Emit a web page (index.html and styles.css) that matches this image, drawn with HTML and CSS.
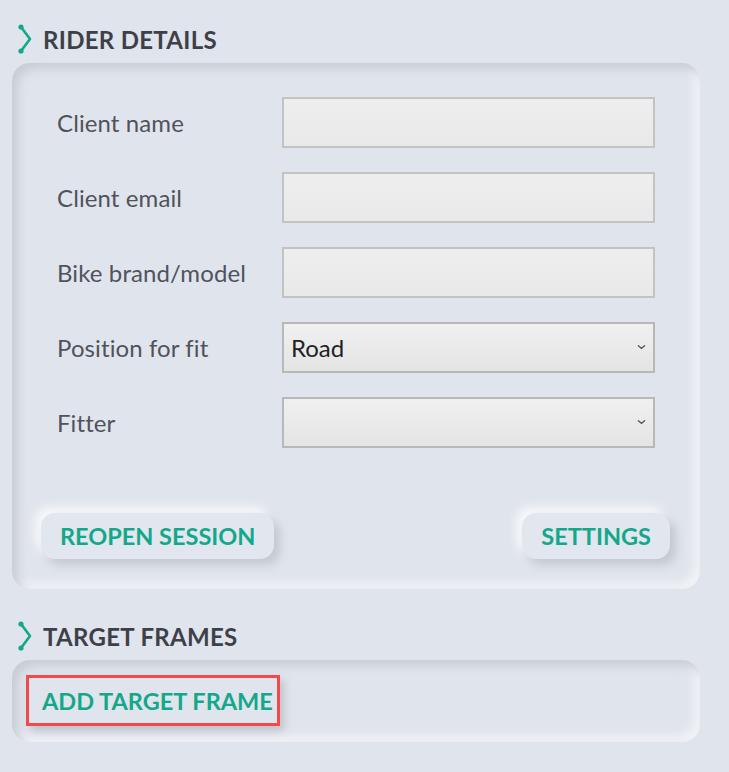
FILE: index.html
```html
<!DOCTYPE html>
<html>
<head>
<meta charset="utf-8">
<link rel="stylesheet" href="styles.css">
</head>
<body>
<div class="page">
  <h2 class="section-title">
    <svg class="chev" viewBox="0 0 16 30" width="16" height="30"><polyline points="4,3 13,15 4,27" fill="none" stroke="#14a88a" stroke-width="2.6" stroke-linecap="round" stroke-linejoin="round"/><circle cx="4" cy="3" r="2.6" fill="#14a88a"/><circle cx="4" cy="27" r="2.6" fill="#14a88a"/></svg>
    <span>RIDER DETAILS</span>
  </h2>
  <div class="card card-rider">
    <div class="form">
      <label class="label">Client name</label>
      <input class="field" type="text">
      <label class="label">Client email</label>
      <input class="field" type="text">
      <label class="label">Bike brand/model</label>
      <input class="field" type="text">
      <label class="label">Position for fit</label>
      <div class="select-wrap">
        <select class="field select"><option>Road</option></select>
        <svg class="caret" viewBox="0 0 10 6" width="9" height="6"><polyline points="1.5,1.5 5,4.5 8.5,1.5" fill="none" stroke="#555" stroke-width="1.4" stroke-linecap="round"/></svg>
      </div>
      <label class="label">Fitter</label>
      <div class="select-wrap">
        <select class="field select"><option></option></select>
        <svg class="caret" viewBox="0 0 10 6" width="9" height="6"><polyline points="1.5,1.5 5,4.5 8.5,1.5" fill="none" stroke="#555" stroke-width="1.4" stroke-linecap="round"/></svg>
      </div>
    </div>
    <div class="actions">
      <button class="btn">REOPEN SESSION</button>
      <button class="btn">SETTINGS</button>
    </div>
  </div>
  <h2 class="section-title second">
    <svg class="chev" viewBox="0 0 16 30" width="16" height="30"><polyline points="4,3 13,15 4,27" fill="none" stroke="#14a88a" stroke-width="2.6" stroke-linecap="round" stroke-linejoin="round"/><circle cx="4" cy="3" r="2.6" fill="#14a88a"/><circle cx="4" cy="27" r="2.6" fill="#14a88a"/></svg>
    <span>TARGET FRAMES</span>
  </h2>
  <div class="card card-frames">
    <button class="btn btn-flat btn-highlight">ADD TARGET FRAME</button>
  </div>
</div>
</body>
</html>
```

FILE: styles.css
```css
html, body {
  margin: 0;
  padding: 0;
  background: #e0e4ec;
}
body {
  font-family: "Lato", "Open Sans", sans-serif;
  color: #4b4e57;
}
.page {
  width: 688px;
  margin-left: 12px;
  padding-top: 23px;
}
.section-title {
  display: flex;
  align-items: center;
  gap: 10px;
  margin: 0;
  padding-left: 5px;
  height: 32px;
  font-size: 24px;
  font-weight: 700;
  color: #3e4049;
  letter-spacing: 0.3px;
}
.section-title.second {
  margin-top: 31px;
}
.chev {
  flex: none;
}
.card {
  margin-top: 8px;
  border-radius: 18px;
  background: #e0e4ec;
  box-shadow: inset 6px 6px 10px #c9cdd5, inset -6px -6px 10px #f1f3f7;
}
.card-rider {
  padding: 34px 30px 30px 29px;
}
.form {
  display: grid;
  grid-template-columns: 225px 373px;
  row-gap: 24px;
  padding-left: 16px;
  align-items: center;
}
.label {
  font-size: 24px;
  color: #50535c;
  font-weight: 400;
  letter-spacing: 0.1px;
}
.field {
  box-sizing: border-box;
  width: 373px;
  height: 51px;
  margin: 0;
  border: 2px solid #c3c3c3;
  background: linear-gradient(#eeeeee, #e9e9e9);
  font-family: "Lato", "Open Sans", sans-serif;
  font-size: 24px;
  color: #222;
  padding: 0 7px;
  border-radius: 0;
  outline: none;
}
.select-wrap {
  position: relative;
  width: 373px;
  height: 51px;
}
.select {
  appearance: none;
  -webkit-appearance: none;
  background: linear-gradient(#f0f0f0, #e4e4e4);
  border-color: #b8b8b8;
}
.caret {
  position: absolute;
  right: 9px;
  top: 22px;
  pointer-events: none;
}
.actions {
  display: flex;
  justify-content: space-between;
  margin-top: 65px;
}
.btn {
  height: 46px;
  padding: 0 19px;
  border: none;
  border-radius: 14px;
  background: #e2e6ee;
  color: #14a88a;
  font-family: "Lato", "Open Sans", sans-serif;
  font-size: 23.5px;
  font-weight: 700;
  box-shadow: 6px 6px 10px #c4c8d0, -6px -6px 10px #f7f8fb;
}
.card-frames {
  padding: 15px 14px 15px 14px;
  height: 52px;
}
.btn-flat {
  height: 51px;
  padding: 0 13px;
  border-radius: 0;
  background: transparent;
  box-shadow: 4px 5px 8px #bfc3cb;
}
.btn-highlight {
  border: 3px solid #f24a4a;
  width: 254px;
  text-align: left;
  white-space: nowrap;
}
```
